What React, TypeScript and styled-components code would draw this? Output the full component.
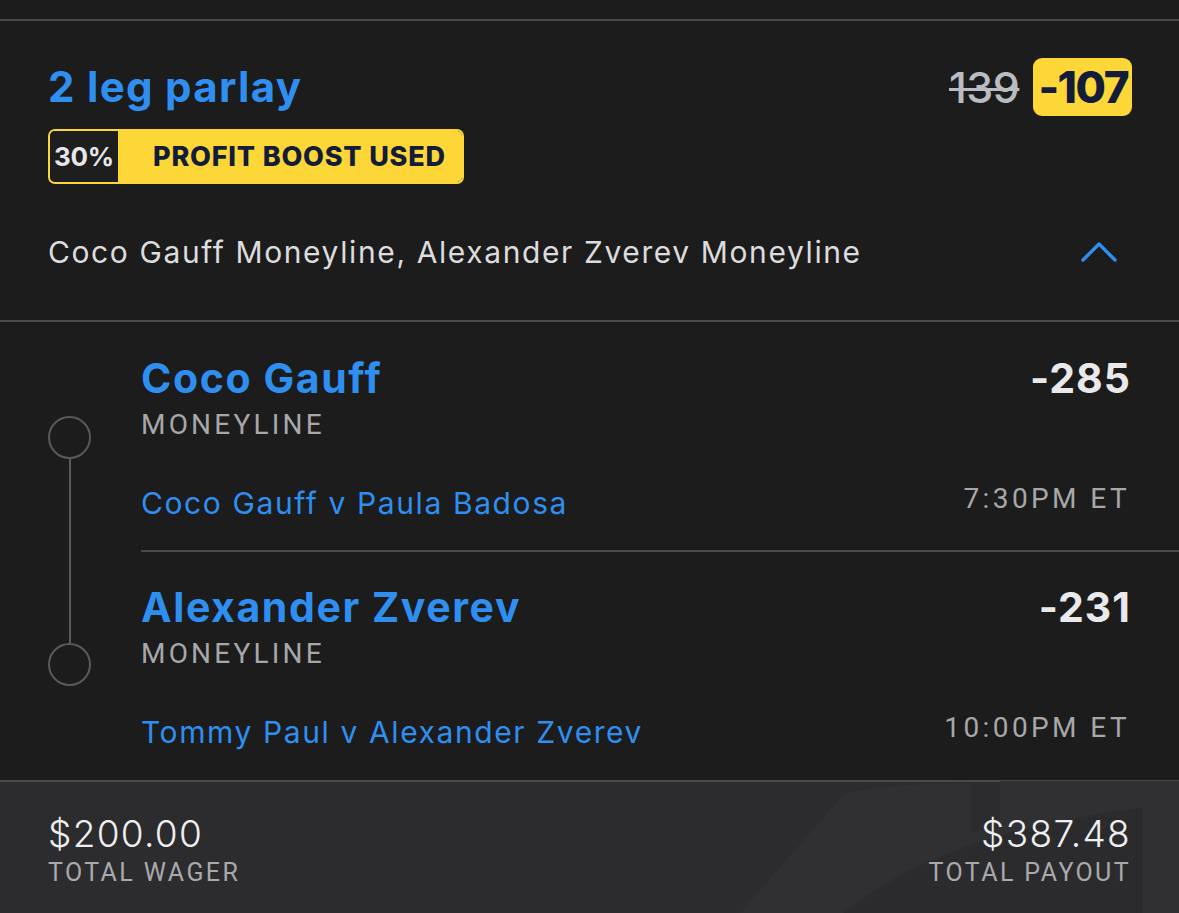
import React from "react";
import styled, { createGlobalStyle } from "styled-components";

const GlobalStyle = createGlobalStyle`
  html, body {
    margin: 0;
    padding: 0;
    background: #1c1c1c;
  }
  * {
    box-sizing: border-box;
  }
`;

const BLUE = "#2f8ff0";
const YELLOW = "#fcd737";
const NAVY = "#131c38";
const RULE = "#4a4a4b";

type Leg = {
  name: string;
  odds: string;
  market: string;
  match: string;
  time: string;
};

const LEGS: Leg[] = [
  {
    name: "Coco Gauff",
    odds: "-285",
    market: "MONEYLINE",
    match: "Coco Gauff v Paula Badosa",
    time: "7:30PM ET",
  },
  {
    name: "Alexander Zverev",
    odds: "-231",
    market: "MONEYLINE",
    match: "Tommy Paul v Alexander Zverev",
    time: "10:00PM ET",
  },
];

const App: React.FC = () => {
  return (
    <>
      <GlobalStyle />
      <Page>
        <TopStrip />

        {/* parlay header */}
        <Header>
          <TitleRow>
            <Title>2 leg parlay</Title>
            <OddsGroup>
              <OldOdds>139</OldOdds>
              <BoostedOdds>-107</BoostedOdds>
            </OddsGroup>
          </TitleRow>

          <Badge>
            <BadgePercent>30%</BadgePercent>
            <BadgeLabel>PROFIT BOOST USED</BadgeLabel>
          </Badge>

          <SummaryRow>
            <Summary>Coco Gauff Moneyline, Alexander Zverev Moneyline</Summary>
            <svg width="36" height="22" viewBox="0 0 36 22" fill="none">
              <polyline
                points="2,19 18,3 34,19"
                stroke={BLUE}
                strokeWidth="3.4"
                strokeLinecap="round"
                strokeLinejoin="round"
              />
            </svg>
          </SummaryRow>
        </Header>

        {/* legs */}
        <LegList>
          {LEGS.map((leg, i) => (
            <LegRow key={leg.match}>
              <Marker>
                <RailPart $visible={i > 0} $top={i === 0 ? 94 : 91} />
                <Dot />
                <RailPart $visible={i < LEGS.length - 1} $grow />
              </Marker>
              <LegBody $divider={i < LEGS.length - 1} $first={i === 0}>
                <LegTop>
                  <LegName>{leg.name}</LegName>
                  <LegOdds>{leg.odds}</LegOdds>
                </LegTop>
                <Market>{leg.market}</Market>
                <LegBottom>
                  <Match>{leg.match}</Match>
                  <Time>{leg.time}</Time>
                </LegBottom>
              </LegBody>
            </LegRow>
          ))}
        </LegList>

        {/* totals */}
        <Footer>
          <Watermark viewBox="0 0 479 132" preserveAspectRatio="none">
            <path d="M40,132 L145,12 C190,4 230,2 270,2 L270,52 L300,46 L300,0 L479,0 L479,132 Z" fill="#303032" />
            <path d="M143,132 C210,80 300,44 443,27 L443,132 Z" fill="#2b2b2d" />
          </Watermark>
          <Total>
            <Amount>$200.00</Amount>
            <TotalLabel>TOTAL WAGER</TotalLabel>
          </Total>
          <Total $right>
            <Amount>$387.48</Amount>
            <TotalLabel>TOTAL PAYOUT</TotalLabel>
          </Total>
        </Footer>
      </Page>
    </>
  );
};

export default App;

const Page = styled.div`
  width: 1179px;
  height: 913px;
  overflow: hidden;
  background: #1c1c1c;
  font-family: "Inter", "Liberation Sans", sans-serif;
  display: flex;
  flex-direction: column;
`;

const TopStrip = styled.div`
  height: 21px;
  flex: none;
  border-bottom: 2px solid ${RULE};
`;

const Header = styled.div`
  padding: 37px 47px 50px 48px;
  border-bottom: 2px solid ${RULE};
  display: flex;
  flex-direction: column;
  align-items: flex-start;
`;

const TitleRow = styled.div`
  width: 100%;
  height: 58px;
  display: flex;
  align-items: center;
  justify-content: space-between;
`;

const Title = styled.div`
  color: ${BLUE};
  font-size: 42px;
  font-weight: 700;
  letter-spacing: 1.3px;
  line-height: 52px;
`;

const OddsGroup = styled.div`
  display: flex;
  align-items: center;
  gap: 14px;
`;

const OldOdds = styled.span`
  color: #b9bcc3;
  font-size: 43px;
  font-weight: 500;
  text-decoration: line-through;
  text-decoration-thickness: 3px;
  letter-spacing: -0.5px;
`;

const BoostedOdds = styled.span`
  background: ${YELLOW};
  color: ${NAVY};
  font-size: 44px;
  font-weight: 800;
  line-height: 58px;
  height: 58px;
  padding: 0 4px 0 5px;
  border-radius: 9px;
  letter-spacing: -1.5px;
`;

const Badge = styled.div`
  margin-top: 13px;
  height: 55px;
  display: flex;
  border: 2px solid ${YELLOW};
  border-radius: 7px;
  overflow: hidden;
`;

const BadgePercent = styled.div`
  width: 68px;
  background: #1e1e1e;
  color: #e6e6ea;
  font-size: 26px;
  font-weight: 700;
  letter-spacing: -0.3px;
  display: flex;
  align-items: center;
  justify-content: center;
`;

const BadgeLabel = styled.div`
  background: ${YELLOW};
  color: ${NAVY};
  font-size: 27px;
  font-weight: 800;
  display: flex;
  align-items: center;
  padding: 0 16px 0 35px;
  letter-spacing: 0.8px;
`;

const SummaryRow = styled.div`
  margin-top: 50px;
  width: 100%;
  height: 36px;
  display: flex;
  align-items: center;
  justify-content: space-between;
  padding-right: 15px;
`;

const Summary = styled.div`
  color: #dcdcdf;
  font-size: 30px;
  font-weight: 400;
  letter-spacing: 1.6px;
`;

const LegList = styled.div`
  display: flex;
  flex-direction: column;
`;

const LegRow = styled.div`
  display: flex;
`;

const Marker = styled.div`
  width: 141px;
  flex: none;
  padding-left: 48px;
  display: flex;
  flex-direction: column;
  align-items: flex-start;
`;

const RailPart = styled.div<{ $visible: boolean; $top?: number; $grow?: boolean }>`
  width: 43px;
  height: ${(p) => (p.$top ? `${p.$top}px` : "auto")};
  flex: ${(p) => (p.$grow ? "1" : "none")};
  display: flex;
  justify-content: center;

  &::before {
    content: "";
    width: 2px;
    background: ${(p) => (p.$visible ? "#595959" : "transparent")};
  }
`;

const Dot = styled.div`
  width: 43px;
  height: 43px;
  flex: none;
  border: 2px solid #595959;
  border-radius: 50%;
`;

const LegBody = styled.div<{ $divider: boolean; $first: boolean }>`
  flex: 1;
  padding: ${(p) => (p.$first ? "32px 49px 29px 0" : "31px 49px 28px 0")};
  border-bottom: 2px solid ${(p) => (p.$divider ? RULE : "transparent")};
  display: flex;
  flex-direction: column;
`;

const LegTop = styled.div`
  display: flex;
  align-items: center;
  justify-content: space-between;
  height: 48px;
`;

const LegName = styled.div`
  color: ${BLUE};
  font-size: 41px;
  font-weight: 700;
  letter-spacing: 1.6px;
`;

const LegOdds = styled.div`
  color: #e9e9ec;
  font-size: 41px;
  font-weight: 700;
  letter-spacing: 1px;
  margin-right: -1px;
`;

const Market = styled.div`
  margin-top: 6px;
  color: #a7a7aa;
  font-family: "Roboto", "Liberation Sans", sans-serif;
  font-size: 28px;
  font-weight: 400;
  letter-spacing: 3.2px;
  line-height: 34px;
`;

const LegBottom = styled.div`
  margin-top: 43px;
  height: 36px;
  display: flex;
  align-items: center;
  justify-content: space-between;
`;

const Match = styled.div`
  color: ${BLUE};
  font-size: 30px;
  font-weight: 400;
  letter-spacing: 1.6px;
`;

const Time = styled.div`
  color: #a7a7aa;
  font-family: "Roboto", "Liberation Sans", sans-serif;
  font-size: 28px;
  letter-spacing: 3.4px;
  margin-top: -9px;
`;

const Footer = styled.div`
  position: relative;
  flex: 1;
  background: #2c2c2e;
  border-top: 2px solid ${RULE};
  display: flex;
  justify-content: space-between;
  padding: 30px 48px 0 48px;
`;

const Watermark = styled.svg`
  position: absolute;
  right: 0;
  bottom: 0;
  width: 479px;
  height: 132px;
`;

const Total = styled.div<{ $right?: boolean }>`
  position: relative;
  display: flex;
  flex-direction: column;
  align-items: ${(p) => (p.$right ? "flex-end" : "flex-start")};
`;

const Amount = styled.div`
  color: #efeff2;
  font-size: 37px;
  font-weight: 300;
  letter-spacing: 1.3px;
  line-height: 44px;
`;

const TotalLabel = styled.div`
  margin-top: 2px;
  color: #a9a9ac;
  font-family: "Roboto", "Liberation Sans", sans-serif;
  font-size: 25px;
  letter-spacing: 2.4px;
  line-height: 30px;
`;
